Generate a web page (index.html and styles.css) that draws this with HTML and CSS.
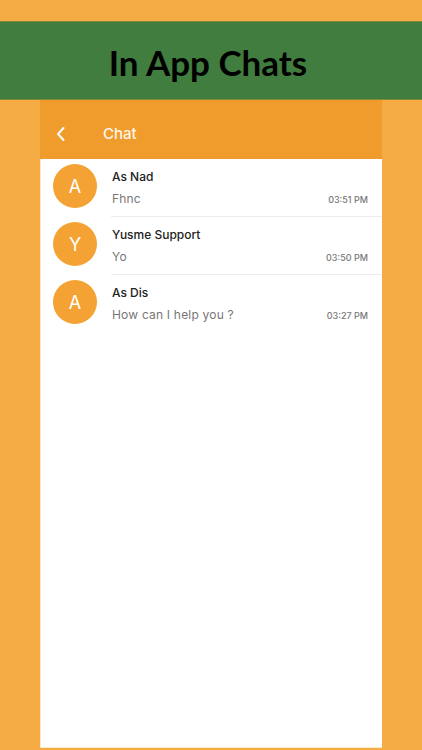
FILE: index.html
```html
<!DOCTYPE html>
<html>
<head>
<meta charset="utf-8">
<link rel="stylesheet" href="styles.css">
</head>
<body>
<div class="page">
  <header class="banner"><h1 class="banner-title">In App Chats</h1></header>
  <main class="phone">
    <div class="appbar">
      <svg class="back" width="12" height="16" viewBox="0 0 12 16"><path d="M8.5 2 L3 8 L8.5 14" fill="none" stroke="#fff" stroke-width="2" stroke-linecap="round" stroke-linejoin="round"/></svg>
      <span class="appbar-title">Chat</span>
    </div>
    <ul class="chats">
      <li class="chat">
        <div class="avatar">A</div>
        <div class="chat-body">
          <div class="chat-name">As Nad</div>
          <div class="chat-line"><span class="chat-msg">Fhnc</span><span class="chat-time">03:51 PM</span></div>
        </div>
      </li>
      <li class="chat">
        <div class="avatar">Y</div>
        <div class="chat-body">
          <div class="chat-name">Yusme Support</div>
          <div class="chat-line"><span class="chat-msg">Yo</span><span class="chat-time">03:50 PM</span></div>
        </div>
      </li>
      <li class="chat">
        <div class="avatar">A</div>
        <div class="chat-body last">
          <div class="chat-name">As Dis</div>
          <div class="chat-line"><span class="chat-msg">How can I help you ?</span><span class="chat-time">03:27 PM</span></div>
        </div>
      </li>
    </ul>
  </main>
</div>
</body>
</html>
```

FILE: styles.css
```css
* { box-sizing: border-box; }
html, body { margin: 0; padding: 0; }
body { background: #f6ac45; font-family: "Inter", sans-serif; }
.page { width: 422px; height: 750px; display: flex; flex-direction: column; overflow: hidden; }
.banner { margin-top: 21px; height: 79px; background: #407d3e; display: flex; align-items: center; justify-content: center; border-top: 1px solid #7d8a3c; border-bottom: 1px solid #7d8a3c; }
.banner-title { margin: 0; font-family: "Lato", sans-serif; font-weight: 700; font-size: 35px; color: #000; line-height: 1; padding: 4px 6px 0 0; }
.phone { margin: 0 40px 2px; flex: 1; background: #fff; display: flex; flex-direction: column; border-left: 1px solid #fde9c8; border-bottom: 1px solid #fde9c8; }
.appbar { height: 59px; background: #f09c2d; display: flex; align-items: center; padding-top: 8px; margin-left: -1px; }
.back { margin-left: 15px; }
.appbar-title { margin-left: 36px; color: #fff6e8; font-size: 15px; font-weight: 500; }
.chats { list-style: none; margin: 0; padding: 0; }
.chat { display: flex; height: 58px; }
.avatar { width: 44px; height: 44px; border-radius: 50%; background: #f4a233; color: #fff; font-size: 18px; display: flex; align-items: center; justify-content: center; margin: 5px 14px 0 12px; flex: none; }
.chat-body { flex: 1; border-bottom: 1px solid #ececec; padding: 9px 14px 0 1px; }
.chat-body.last { border-bottom: none; }
.chat-name { font-size: 12px; color: #222; font-weight: 500; line-height: 17px; }
.chat-line { display: flex; justify-content: space-between; align-items: baseline; margin-top: 5px; }
.chat-msg { font-size: 12px; color: #777; line-height: 17px; letter-spacing: 0.2px; }
.chat-time { font-size: 9px; font-weight: 500; color: #777; }
```
